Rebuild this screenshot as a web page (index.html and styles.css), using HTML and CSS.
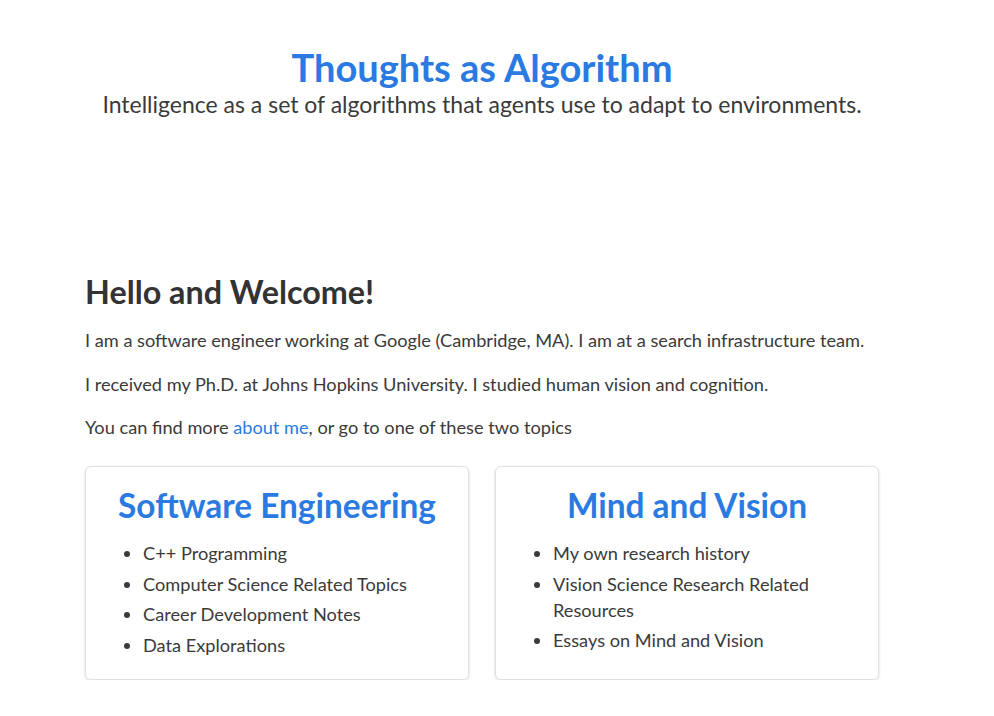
FILE: index.html
```html
<!DOCTYPE html>
<html lang="en">
<head>
<meta charset="utf-8">
<title>Thoughts as Algorithm</title>
<link rel="stylesheet" href="styles.css">
</head>
<body>
<header class="site-header">
  <h1 class="site-title">Thoughts as Algorithm</h1>
  <p class="site-tagline">Intelligence as a set of algorithms that agents use to adapt to environments.</p>
</header>
<main class="content">
  <h2 class="welcome">Hello and Welcome!</h2>
  <p>I am a software engineer working at Google (Cambridge, MA). I am at a search infrastructure team.</p>
  <p>I received my Ph.D. at Johns Hopkins University. I studied human vision and cognition.</p>
  <p>You can find more <a href="#">about me</a>, or go to one of these two topics</p>
  <div class="cards">
    <section class="card">
      <h3 class="card-title">Software Engineering</h3>
      <ul>
        <li>C++ Programming</li>
        <li>Computer Science Related Topics</li>
        <li>Career Development Notes</li>
        <li>Data Explorations</li>
      </ul>
    </section>
    <section class="card">
      <h3 class="card-title">Mind and Vision</h3>
      <ul>
        <li>My own research history</li>
        <li>Vision Science Research Related Resources</li>
        <li>Essays on Mind and Vision</li>
      </ul>
    </section>
  </div>
</main>
</body>
</html>
```
FILE: styles.css
```css
html, body {
  margin: 0;
  padding: 0;
  background: #fff;
}
body {
  font-family: Lato, "Noto Sans", sans-serif;
  color: #3a3a3a;
  font-size: 18.2px;
}
.site-header {
  width: 794px;
  margin-left: 85px;
  padding-top: 44px;
  text-align: center;
}
.site-title {
  margin: 0;
  font-size: 38px;
  font-weight: 700;
  line-height: 46px;
  color: #2a7ae2;
}
.site-tagline {
  margin: 0;
  font-size: 23px;
  line-height: 28px;
  color: #3a3a3a;
}
.content {
  width: 794px;
  margin-left: 85px;
  padding-top: 154px;
}
.welcome {
  margin: 0 0 15px;
  font-size: 32.3px;
  line-height: 40px;
  font-weight: 700;
  color: #333;
}
.content p {
  margin: 0 0 17.5px;
  line-height: 26px;
}
a {
  color: #2a7ae2;
  text-decoration: none;
}
.cards {
  display: grid;
  grid-template-columns: 1fr 1fr;
  gap: 26px;
  margin-top: 26px;
}
.card {
  border: 1px solid #e0e0e0;
  border-radius: 6px;
  box-shadow: 0 1px 3px rgba(0,0,0,0.14);
  padding: 18px 20px 17px;
}
.card-title {
  margin: 0 0 15px;
  text-align: center;
  font-size: 33.4px;
  line-height: 40px;
  font-weight: 700;
  color: #2a7ae2;
}
.card ul {
  margin: 0;
  padding-left: 37px;
}
.card li {
  line-height: 26px;
  margin-bottom: 4.5px;
}
```
